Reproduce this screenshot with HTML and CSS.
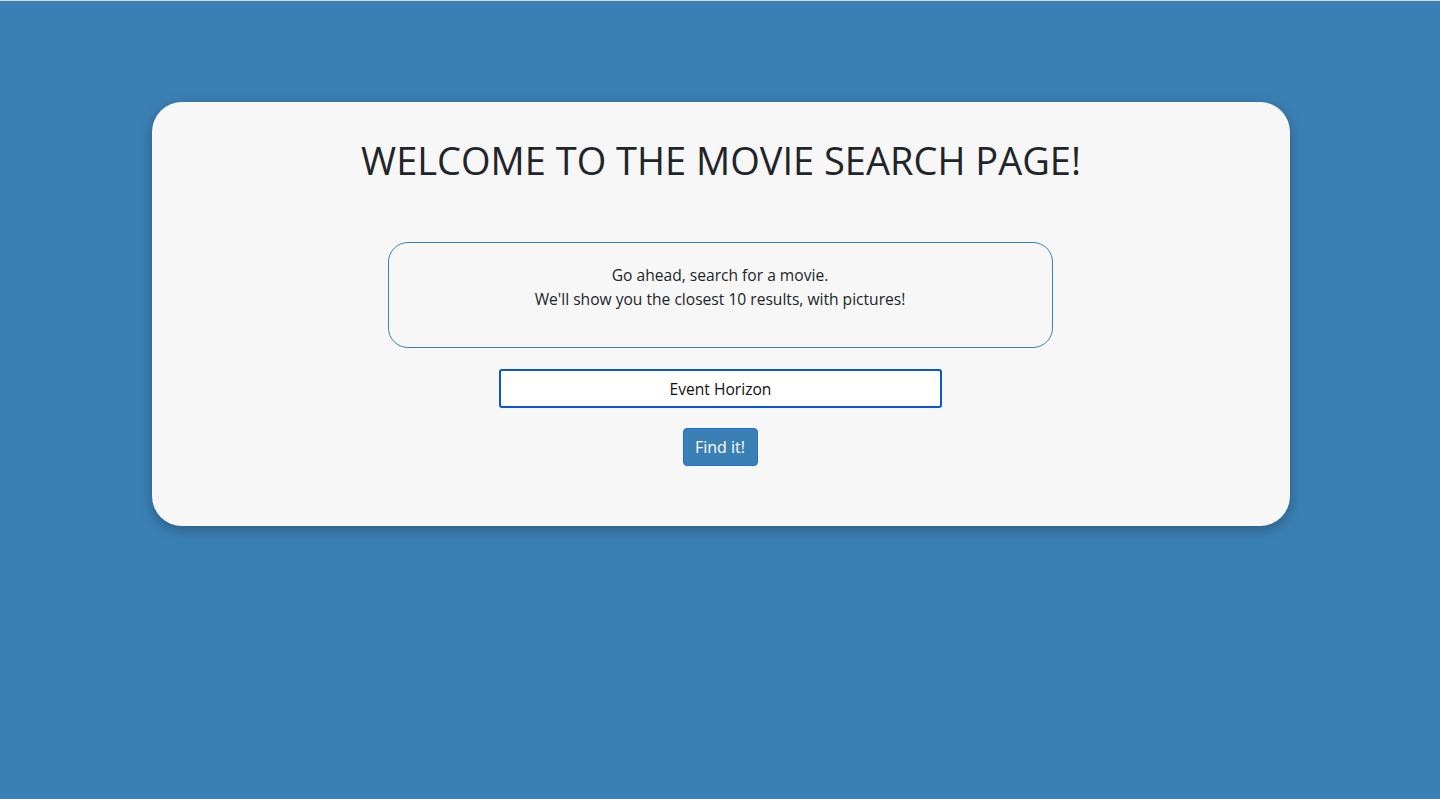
FILE: index.html
```html
<!DOCTYPE html>
<html lang="en">
<head>
<meta charset="utf-8">
<title>Movie Search</title>
<link rel="stylesheet" href="styles.css">
</head>
<body>
<main class="page">
  <section class="card">
    <h1 class="title">WELCOME TO THE MOVIE SEARCH PAGE!</h1>
    <div class="intro">
      <p>Go ahead, search for a movie.</p>
      <p>We'll show you the closest 10 results, with pictures!</p>
    </div>
    <form class="search" onsubmit="return false;">
      <input class="search-input" type="text" value="Event Horizon" autofocus>
      <button class="search-btn" type="submit">Find it!</button>
    </form>
  </section>
</main>
</body>
</html>
```
FILE: styles.css
```css
html, body {
  margin: 0;
  padding: 0;
  height: 100%;
}
body {
  background: #3b80b5;
  font-family: "Open Sans", "Noto Sans", sans-serif;
  color: #212529;
  border-top: 1px solid #d9d9d9;
  box-sizing: border-box;
}
.page {
  padding-top: 101px;
  display: flex;
  justify-content: center;
}
.card {
  width: 1138px;
  margin-left: 2px;
  box-sizing: border-box;
  background: #f7f7f7;
  border-radius: 30px;
  box-shadow: 0 4px 14px rgba(0, 0, 0, 0.28);
  padding: 34px 0 60px;
  display: flex;
  flex-direction: column;
  align-items: center;
}
.title {
  margin: 0;
  font-weight: 400;
  font-size: 38px;
  line-height: 48px;
  letter-spacing: 0;
}
.intro {
  margin-top: 58px;
  margin-right: 2px;
  width: 665px;
  height: 106px;
  box-sizing: border-box;
  border: 1px solid #3b80b5;
  border-radius: 20px;
  padding-top: 20px;
  text-align: center;
  font-size: 15.6px;
  line-height: 24px;
}
.intro p {
  margin: 0;
}
.search {
  margin-top: 21px;
  display: flex;
  flex-direction: column;
  align-items: center;
}
.search-input {
  width: 443px;
  height: 39px;
  margin-right: 1px;
  box-sizing: border-box;
  border: 2px solid #0b57d0;
  border-radius: 3px;
  background: #fff;
  text-align: center;
  font-family: "Open Sans", "Noto Sans", sans-serif;
  font-size: 15.6px;
  color: #111;
  outline: none;
}
.search-btn {
  margin-top: 20px;
  margin-right: 2px;
  width: 75px;
  height: 38px;
  border: 1px solid #1e6fd9;
  border-radius: 4px;
  background: #3b80b5;
  color: #fff;
  font-family: "Open Sans", "Noto Sans", sans-serif;
  font-size: 16px;
  font-weight: 500;
  padding: 0;
}
```
